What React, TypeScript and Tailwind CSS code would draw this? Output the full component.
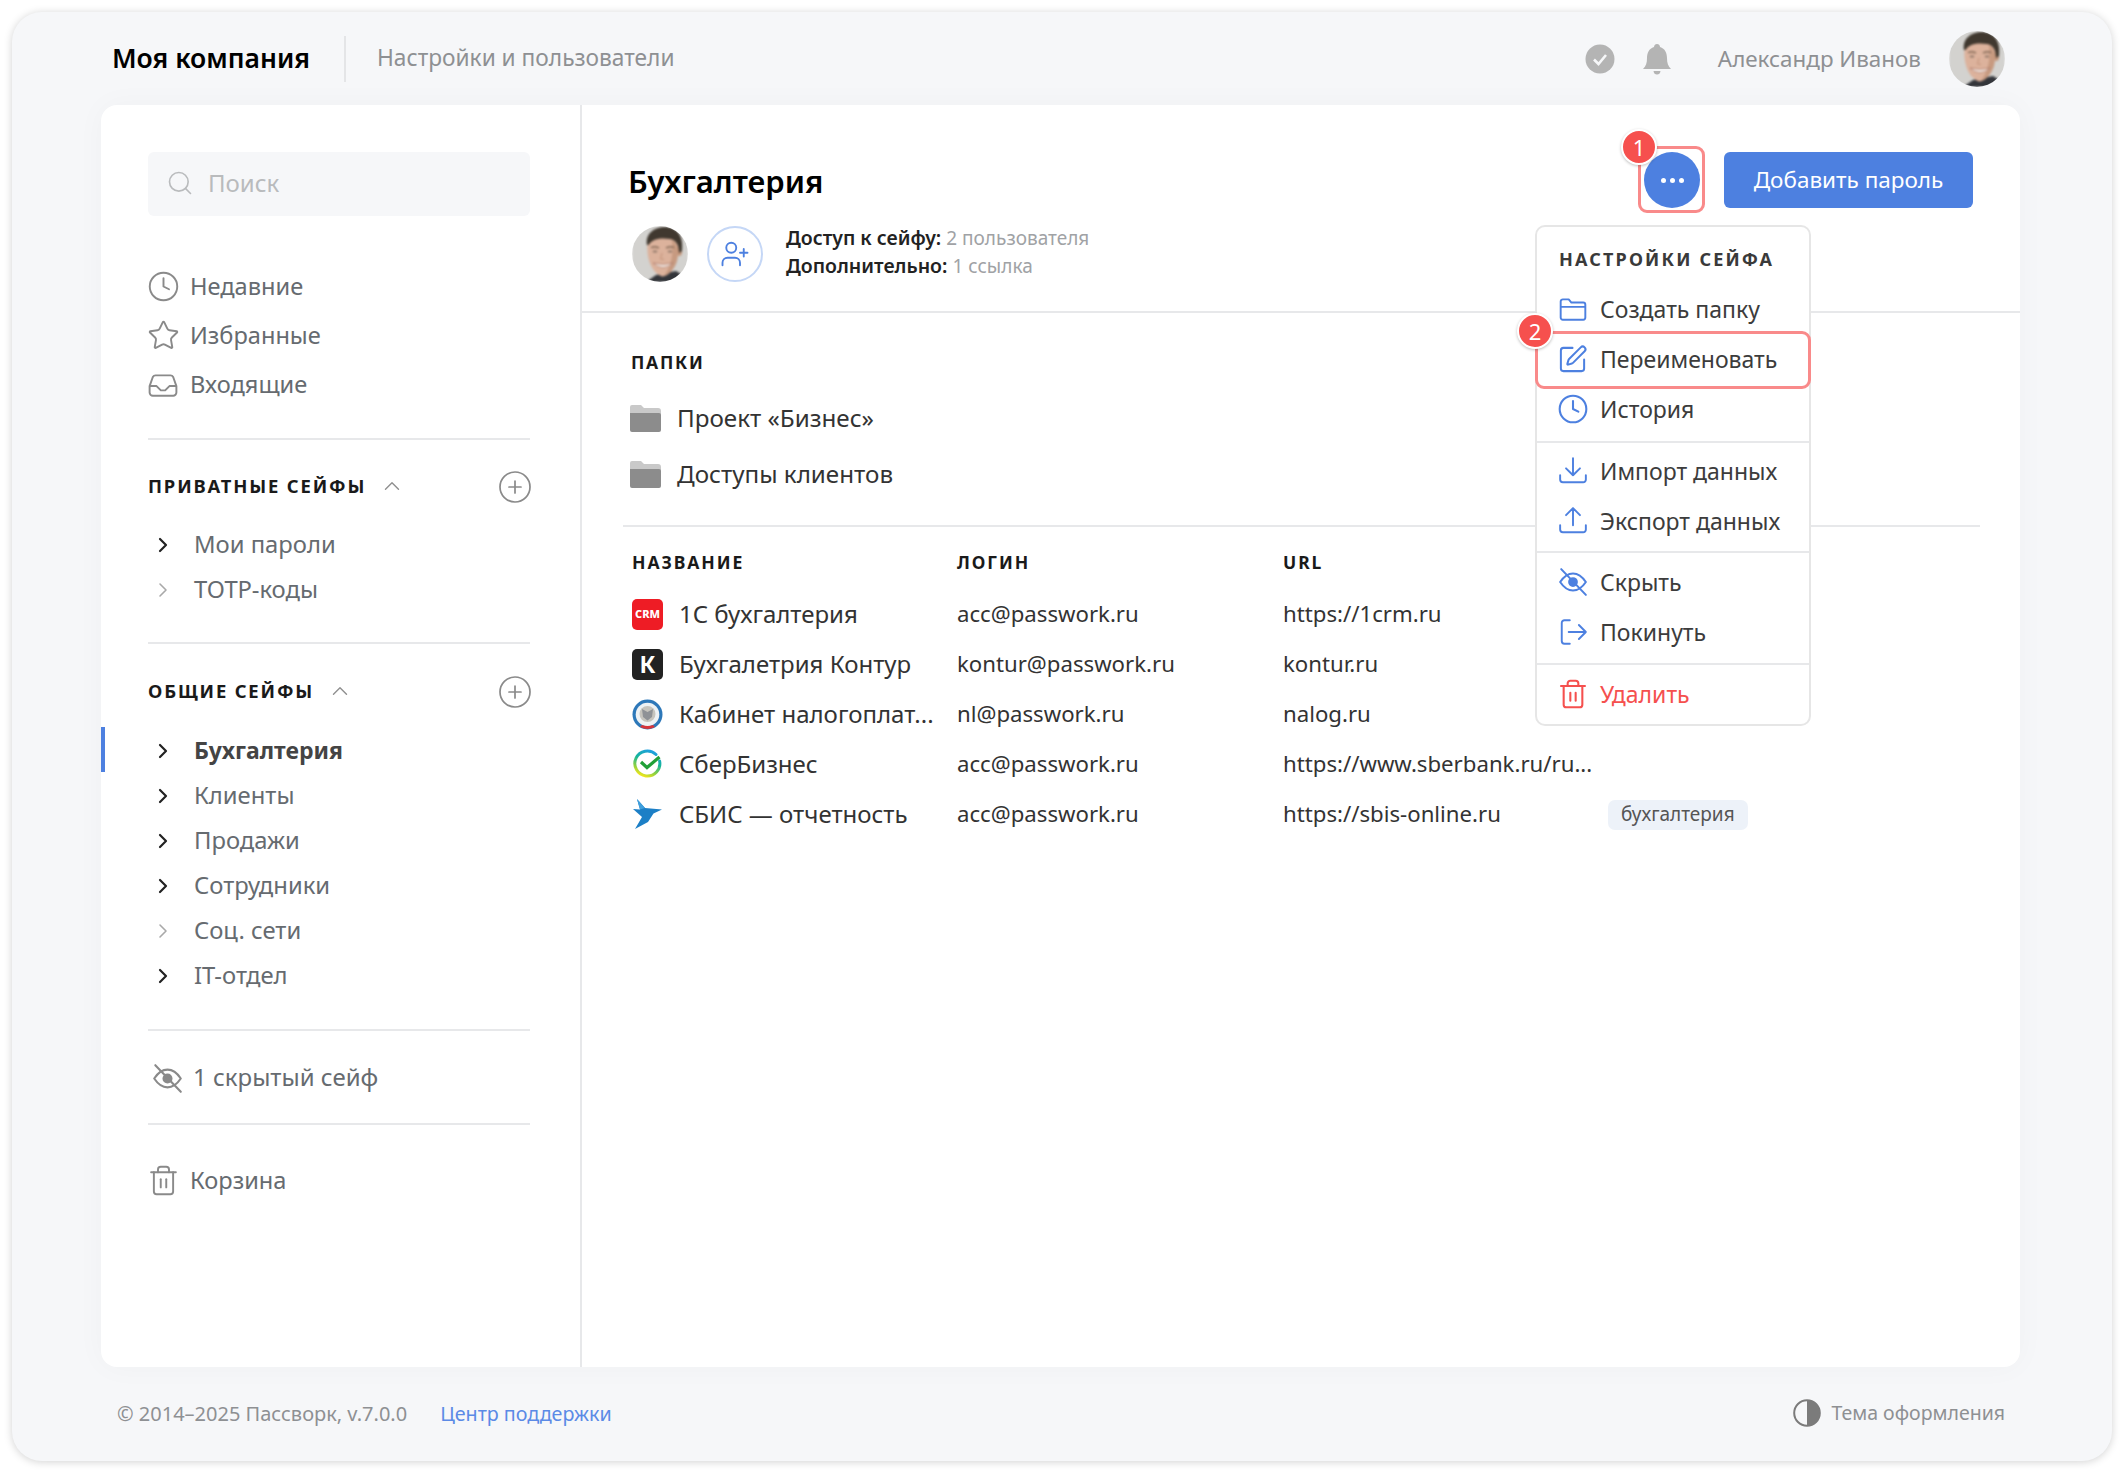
import { ChevronRight, ChevronUp, CirclePlus, Clock, Search, SquarePen, Star, Trash2, UserPlus } from 'lucide-react';
import type { ReactNode } from 'react';

function Avatar() {
    return (
        <div className="w-[56px] h-[56px] rounded-full overflow-hidden flex-shrink-0">
            <svg width="56" height="56" viewBox="0 0 56 56" className="blur-[0.9px]">
                <rect width="56" height="56" fill="#d3d2cf" />
                <path d="M14 56 L24 49 L44 45 L52 50 L52 56 Z" fill="#33353a" />
                <path d="M15.5 18 C14.5 30 18 46 30 50.5 C40 49.5 46.5 36 46.5 22 C46.5 14 40 10 30 10 C22 10 16.5 12 15.5 18Z" fill="#dcb29c" />
                <path d="M40 14 C46 18 47 26 45 35 C43 42 38 48 32 50 C38 42 42 30 40 14Z" fill="#c79a80" />
                <ellipse cx="47.5" cy="25" rx="2.6" ry="5" fill="#c4977c" />
                <path d="M15 19 C13 8 22 1 33 1 C44 1 52 9 50 25 L47 27 C47 19 44 14 38 13 C30 12 21 12 16.5 19Z" fill="#40382f" />
                <path d="M19 21.5 Q23 20 27 22 M34 22 Q38 20 42 21.5" stroke="#6f5847" strokeWidth="1.3" fill="none" />
                <ellipse cx="23" cy="25.5" rx="2.4" ry="1" fill="#8a7364" />
                <ellipse cx="38" cy="25.5" rx="2.4" ry="1" fill="#8a7364" />
                <path d="M30 27 L28.5 33 L32 33.5" stroke="#c4937a" strokeWidth="1" fill="none" />
                <path d="M21 37 Q31 46 41 37 Q31 40 21 37Z" fill="#f7f1ec" stroke="#a66f5b" strokeWidth="0.7" />
            </svg>
        </div>
    );
}

function EyeOffIcon({ className }: { className: string }) {
    return (
        <svg viewBox="0 0 28 28" fill="none" stroke="currentColor" strokeWidth="1.9" strokeLinecap="round" strokeLinejoin="round" className={className}>
            <path d="M2 14 C6 8 10 6 14 6 S22 8 26 14 C22 20 18 22 14 22 S6 20 2 14Z" />
            <circle cx="14" cy="14" r="3.6" fill="currentColor" />
            <path d="M3 2 L26 26" />
        </svg>
    );
}

function InboxIcon() {
    return (
        <svg viewBox="0 0 28 28" fill="none" stroke="#8a8a8a" strokeWidth="1.8" strokeLinejoin="round" className="w-[30px] h-[30px] flex-shrink-0">
            <path d="M1.5 15 L4.5 6.5 A3 3 0 0 1 7 5 H21 A3 3 0 0 1 23.5 6.5 L26.5 15 V21 A3 3 0 0 1 23.5 24 H4.5 A3 3 0 0 1 1.5 21Z" />
            <path d="M1.5 15 H8 L12 19 H16 L20 15 H26.5" />
        </svg>
    );
}

function MenuIcon({ d }: { d: string }) {
    return (
        <svg viewBox="0 0 28 28" fill="none" stroke="#4d80e0" strokeWidth="1.8" strokeLinecap="round" strokeLinejoin="round" className="w-[30px] h-[30px] -ml-[1px]">
            <path d={d} />
        </svg>
    );
}

function GrayFolder() {
    return (
        <svg width="31" height="27" viewBox="0 0 31 27" className="flex-shrink-0">
            <path d="M2 0 H11 L14 3 H28 Q31 3 31 6 V14 H0 V2 Q0 0 2 0Z" fill="#c9c9c9" />
            <path d="M0 8 H29 Q31 8 31 10 V25 Q31 27 29 27 H2 Q0 27 0 25Z" fill="#8c8c8c" />
        </svg>
    );
}

function SberLogo() {
    return (
        <svg width="31" height="31" viewBox="0 0 31 31">
            <defs>
                <linearGradient id="sber" x1="0.7" y1="0" x2="0.3" y2="1">
                    <stop offset="0" stopColor="#1e9fe0" />
                    <stop offset="0.4" stopColor="#16b59a" />
                    <stop offset="0.75" stopColor="#8fd13f" />
                    <stop offset="1" stopColor="#f0e61e" />
                </linearGradient>
            </defs>
            <path d="M24 5.5 A12.5 12.5 0 1 0 27.6 12" fill="none" stroke="url(#sber)" strokeWidth="3" strokeLinecap="round" />
            <path d="M9 13 L15 18.5 L27.5 8" fill="none" stroke="#21a038" strokeWidth="3.2" />
        </svg>
    );
}

function NalogLogo() {
    return (
        <svg width="31" height="31" viewBox="0 0 31 31" className="blur-[0.4px]">
            <circle cx="15.5" cy="15.5" r="15" fill="#2d78b9" />
            <circle cx="15.5" cy="15.5" r="11.8" fill="#eef2f4" />
            <circle cx="15.5" cy="15" r="8" fill="#c6c4bd" />
            <path d="M10 10 L15.5 13 L21 10 L20 18 L15.5 21.5 L11 18Z" fill="#8f9296" />
            <path d="M8 28 Q15.5 32 23 28 L21 26 Q15.5 28 10 26Z" fill="#d8343a" />
        </svg>
    );
}

function SbisLogo() {
    return (
        <svg width="31" height="31" viewBox="0 0 31 31">
            <path d="M5 0 L13 9 L30 10.5 L21.5 14.5 L16 23 L3 30 L10 18 L1 10 L8 10.5Z" fill="#1c7fc6" />
            <path d="M5 0 L13 9 L8 10.5Z" fill="#3f9fdc" />
        </svg>
    );
}

function Divider({ className }: { className: string }) {
    return <div className={`h-[2px] bg-[#e7e8ea] ${className}`}></div>;
}

function NavRow({ icon, label }: { icon: ReactNode; label: string }) {
    return (
        <div className="h-[49px] flex items-center">
            <div className="w-[30px] flex justify-center">{icon}</div>
            <span className="ml-[12px] text-[23.6px] text-[#666b70]">{label}</span>
        </div>
    );
}

function SectionHead({ title }: { title: string }) {
    return (
        <div className="h-[46px] flex items-center justify-between">
            <div className="flex items-center gap-[13px]">
                <span className="text-[18.4px] font-bold tracking-[0.1em] text-[#1a1a1a]">{title}</span>
                <ChevronUp size={26} strokeWidth={1.3} color="#8f8f8f" />
            </div>
            <CirclePlus size={36} strokeWidth={1.15} color="#8a8a8a" className="-mr-[3px] mt-[2px]" />
        </div>
    );
}

function VaultRow({ label, dim, active }: { label: string; dim?: boolean; active?: boolean }) {
    return (
        <div className="relative h-[45px] flex items-center pt-[2px]">
            {active && <div className="absolute left-[-47px] top-0 h-[45px] w-[4px] bg-[#4d80e0]"></div>}
            <div className="w-[46px] pl-[3px]">
                <ChevronRight size={24} strokeWidth={dim ? 1.6 : 2.2} color={dim ? '#a9a9a9' : '#222'} />
            </div>
            <span className={active ? 'text-[23px] font-bold text-[#444]' : 'text-[23.8px] text-[#666b70]'}>{label}</span>
        </div>
    );
}

function MenuItem({ icon, label, red }: { icon: ReactNode; label: string; red?: boolean }) {
    return (
        <div className="h-[50px] flex items-center pl-[22px] pb-[2px]">
            <div className="w-[41px] flex">{icon}</div>
            <span className={`text-[23px] ${red ? 'text-[#f5504e]' : 'text-[#3c3c3c]'}`}>{label}</span>
        </div>
    );
}

const tray = 'M2 18 V22 A2.5 2.5 0 0 0 4.5 24.5 H23.5 A2.5 2.5 0 0 0 26 22 V18';

const rows = [
    { logo: <div className="w-[31px] h-[31px] rounded-[5px] bg-[#ee1c25] flex items-center justify-center text-white text-[11px] font-extrabold">CRM</div>, name: '1С бухгалтерия', login: 'acc@passwork.ru', url: 'https://1crm.ru' },
    { logo: <div className="w-[31px] h-[31px] rounded-[5px] bg-[#222222] flex items-center justify-center text-white text-[23px] font-bold">К</div>, name: 'Бухгалетрия Контур', login: 'kontur@passwork.ru', url: 'kontur.ru' },
    { logo: <NalogLogo />, name: 'Кабинет налогоплат...', login: 'nl@passwork.ru', url: 'nalog.ru' },
    { logo: <SberLogo />, name: 'СберБизнес', login: 'acc@passwork.ru', url: 'https://www.sberbank.ru/ru...' },
    { logo: <SbisLogo />, name: 'СБИС — отчетность', login: 'acc@passwork.ru', url: 'https://sbis-online.ru', tag: 'бухгалтерия' },
];

export default function App() {
    return (
        <div className="w-[2124px] h-[1473px] bg-white p-[12px] font-['Noto_Sans',sans-serif] overflow-hidden">
            <div className="h-[1449px] rounded-[30px] bg-[#f6f7f9] shadow-[0_1px_8px_rgba(0,0,0,0.18)] flex flex-col">
                <header className="h-[93px] flex items-center pl-[100px] pr-[107px]">
                    <span className="text-[26.5px] font-semibold text-black">Моя компания</span>
                    <div className="w-[2px] h-[46px] bg-[#e4e5e7] ml-[34px] mr-[31px]"></div>
                    <span className="text-[22.7px] text-[#8e9093]">Настройки и пользователи</span>
                    <div className="flex-grow"></div>
                    <svg width="30" height="30" viewBox="0 0 30 30">
                        <circle cx="15" cy="15" r="14.5" fill="#b4b4b4" />
                        <path d="M9 15.5 L13.5 20 L21 11" fill="none" stroke="#f6f7f9" strokeWidth="2.6" />
                    </svg>
                    <svg width="30" height="32" viewBox="0 0 30 32" className="ml-[27px]">
                        <path d="M15 1 C17 1 18 2.5 18 4 C23 5.5 25 10 25 15 C25 20 26 23 29 26 H1 C4 23 5 20 5 15 C5 10 7 5.5 12 4 C12 2.5 13 1 15 1Z" fill="#b4b4b4" />
                        <path d="M11.5 28 H18.5 Q18 31.5 15 31.5 Q12 31.5 11.5 28Z" fill="#b4b4b4" />
                    </svg>
                    <span className="ml-[46px] mr-[28px] text-[22.4px] text-[#8e9093]">Александр Иванов</span>
                    <Avatar />
                </header>

                <div className="h-[1262px] ml-[89px] w-[1919px] bg-white rounded-[16px] shadow-[0_0_30px_rgba(0,0,0,0.03)] flex">
                    <aside className="w-[481px] flex-shrink-0 border-r-2 border-[#e7e8ea] pt-[47px] pl-[47px] pr-[50px]">
                        <div className="h-[64px] rounded-[6px] bg-[#f6f7f9] flex items-center pl-[18px] pb-[2px]">
                            <Search size={28} strokeWidth={1.4} color="#b9bbbd" />
                            <span className="ml-[14px] text-[24px] text-[#b9bbbd]">Поиск</span>
                        </div>
                        <div className="mt-[46px]">
                            <NavRow icon={<Clock size={33} strokeWidth={1.4} color="#8a8a8a" className="flex-shrink-0" />} label="Недавние" />
                            <NavRow icon={<Star size={33} strokeWidth={1.4} color="#8a8a8a" className="flex-shrink-0" />} label="Избранные" />
                            <NavRow icon={<InboxIcon />} label="Входящие" />
                        </div>
                        <Divider className="mt-[29px]" />
                        <div className="mt-[23px]"><SectionHead title="ПРИВАТНЫЕ СЕЙФЫ" /></div>
                        <div className="mt-[12px]">
                            <VaultRow label="Мои пароли" />
                            <VaultRow label="ТОТР-коды" dim />
                        </div>
                        <Divider className="mt-[31px]" />
                        <div className="mt-[24px]"><SectionHead title="ОБЩИЕ СЕЙФЫ" /></div>
                        <div className="mt-[13px]">
                            <VaultRow label="Бухгалтерия" active />
                            <VaultRow label="Клиенты" />
                            <VaultRow label="Продажи" />
                            <VaultRow label="Сотрудники" />
                            <VaultRow label="Соц. сети" dim />
                            <VaultRow label="IT-отдел" />
                        </div>
                        <Divider className="mt-[32px]" />
                        <div className="mt-[22px] h-[50px] flex items-center pl-[4px] text-[#8a8a8a]">
                            <EyeOffIcon className="w-[31px] h-[31px]" />
                            <span className="ml-[10px] pb-[2px] text-[24px] text-[#666b70]">1 скрытый сейф</span>
                        </div>
                        <Divider className="mt-[20px]" />
                        <div className="mt-[31px] h-[50px]">
                            <NavRow icon={<Trash2 size={33} strokeWidth={1.4} color="#8a8a8a" className="flex-shrink-0" />} label="Корзина" />
                        </div>
                    </aside>

                    <main className="relative flex-grow">
                        <div className="h-[208px] border-b-2 border-[#e7e8ea] flex justify-between pl-[46px] pr-[47px]">
                            <div className="pt-[54px]">
                                <h1 className="h-[44px] flex items-center text-[31px] font-semibold text-black">Бухгалтерия</h1>
                                <div className="mt-[21px] ml-[4px] flex items-center">
                                    <Avatar />
                                    <div className="ml-[19px] w-[56px] h-[56px] rounded-full border-2 border-[#c5d7f6] flex items-center justify-center">
                                        <UserPlus size={30} strokeWidth={1.5} color="#4d80e0" />
                                    </div>
                                    <div className="ml-[23px] pb-[3px] text-[19.5px] leading-[28px]">
                                        <div><span className="font-semibold text-[#222]">Доступ к сейфу:</span> <span className="text-[19px] text-[#a0a2a5]">2 пользователя</span></div>
                                        <div><span className="font-semibold text-[#222]">Дополнительно:</span> <span className="text-[19px] text-[#a0a2a5]">1 ссылка</span></div>
                                    </div>
                                </div>
                            </div>
                            <div className="pt-[47px] flex items-start gap-[24px]">
                                <div className="relative w-[56px] h-[56px] rounded-full bg-[#4d80e0] flex items-center justify-center gap-[4px]">
                                    <span className="w-[5px] h-[5px] rounded-full bg-white"></span>
                                    <span className="w-[5px] h-[5px] rounded-full bg-white"></span>
                                    <span className="w-[5px] h-[5px] rounded-full bg-white"></span>
                                    <div className="absolute left-[-6px] top-[-6px] w-[67px] h-[67px] rounded-[9px] border-[3px] border-[#f98a8a]"></div>
                                    <div className="absolute left-[-23px] top-[-23px] w-[36px] h-[36px] rounded-full bg-[#f6504e] border-2 border-white shadow-[0_1px_3px_rgba(0,0,0,0.25)] flex items-center justify-center text-white text-[22px]">1</div>
                                </div>
                                <button className="w-[249px] h-[56px] rounded-[6px] bg-[#4d80e0] text-white text-[22.5px]">Добавить пароль</button>
                            </div>
                        </div>

                        <div className="pl-[49px] mt-[35px]">
                            <div className="h-[28px] flex items-center text-[17.5px] font-bold tracking-[0.1em] text-[#1a1a1a]">ПАПКИ</div>
                            <div className="mt-[14px] -ml-[1px]">
                                <div className="h-[56px] flex items-center gap-[16px] text-[24.2px] text-[#333]"><GrayFolder />Проект «Бизнес»</div>
                                <div className="h-[56px] flex items-center gap-[16px] text-[24.2px] text-[#333]"><GrayFolder />Доступы клиентов</div>
                            </div>
                        </div>
                        <Divider className="mt-[23px] ml-[41px] w-[1357px]" />

                        <div className="ml-[50px] mt-[21px]">
                            <div className="h-[28px] grid grid-cols-[325px_326px_325px_1fr] items-center text-[17.5px] font-bold tracking-[0.11em] text-[#1a1a1a]">
                                <span>НАЗВАНИЕ</span>
                                <span>ЛОГИН</span>
                                <span>URL</span>
                            </div>
                            <div className="mt-[13px]">
                                {rows.map((row) => (
                                    <div key={row.name} className="h-[50px] grid grid-cols-[325px_326px_325px_1fr] items-center text-[22.2px] text-[#333]">
                                        <div className="flex items-center gap-[16px]">
                                            <div className="w-[31px] h-[31px]">{row.logo}</div>
                                            <span className="whitespace-nowrap text-[24px]">{row.name}</span>
                                        </div>
                                        <span>{row.login}</span>
                                        <span className="whitespace-nowrap">{row.url}</span>
                                        <div className="pb-[2px]">
                                            {row.tag && <span className="inline-flex items-center h-[30px] px-[13px] rounded-[7px] bg-[#edf2f9] text-[19px] text-[#555]">{row.tag}</span>}
                                        </div>
                                    </div>
                                ))}
                            </div>
                        </div>

                        <div className="absolute left-[953px] top-[120px] w-[276px] h-[501px] rounded-[10px] border-2 border-[#e6e6e6] bg-white">
                            <div className="h-[58px] pt-[6px] pl-[22px] flex items-center text-[18px] font-bold tracking-[0.12em] text-[#3a3a3a]">НАСТРОЙКИ СЕЙФА</div>
                            <MenuItem icon={<MenuIcon d="M2.5 7 A2 2 0 0 1 4.5 5 H10 L12.5 8 H23.5 A2 2 0 0 1 25.5 10 V22 A2 2 0 0 1 23.5 24 H4.5 A2 2 0 0 1 2.5 22Z M2.5 12 H25.5" />} label="Создать папку" />
                            <div className="relative">
                                <MenuItem icon={<SquarePen size={31} strokeWidth={1.55} color="#4d80e0" className="-ml-[2px]" />} label="Переименовать" />
                                <div className="absolute left-[-2px] right-[-2px] top-[-4px] bottom-[-4px] rounded-[9px] border-[3px] border-[#f98a8a]"></div>
                                <div className="absolute left-[-20px] top-[-22px] w-[36px] h-[36px] rounded-full bg-[#f6504e] border-2 border-white shadow-[0_1px_3px_rgba(0,0,0,0.25)] flex items-center justify-center text-white text-[22px]">2</div>
                            </div>
                            <MenuItem icon={<Clock size={32} strokeWidth={1.55} color="#4d80e0" className="-ml-[2px]" />} label="История" />
                            <Divider className="mt-[6px]" />
                            <div className="mt-[4px]">
                                <MenuItem icon={<MenuIcon d={`M14 2 V18 M7.5 11.5 L14 18 L20.5 11.5 ${tray}`} />} label="Импорт данных" />
                                <MenuItem icon={<MenuIcon d={`M14 18 V2 M7.5 8.5 L14 2 L20.5 8.5 ${tray}`} />} label="Экспорт данных" />
                            </div>
                            <Divider className="mt-[4px]" />
                            <div className="mt-[5px]">
                                <MenuItem icon={<div className="text-[#4d80e0] -ml-[1px]"><EyeOffIcon className="w-[30px] h-[30px]" /></div>} label="Скрыть" />
                                <MenuItem icon={<MenuIcon d="M11 3 H6 A2.5 2.5 0 0 0 3.5 5.5 V22.5 A2.5 2.5 0 0 0 6 25 H11 M10 14 H26 M19.5 7.5 L26 14 L19.5 20.5" />} label="Покинуть" />
                            </div>
                            <Divider className="mt-[5px]" />
                            <div className="mt-[5px]">
                                <MenuItem icon={<Trash2 size={32} strokeWidth={1.55} color="#f5504e" className="-ml-[2px]" />} label="Удалить" red />
                            </div>
                        </div>
                    </main>
                </div>

                <footer className="flex-grow flex items-center pl-[105px] pr-[107px] text-[20px] text-[#8e9093]">
                    <span>© 2014–2025 Пассворк, v.7.0.0</span>
                    <span className="ml-[33px] text-[19.7px] text-[#5b8ae6]">Центр поддержки</span>
                    <div className="flex-grow"></div>
                    <svg width="28" height="28" viewBox="0 0 28 28" className="mb-[2px]">
                        <circle cx="14" cy="14" r="12.8" fill="none" stroke="#7b7b7b" strokeWidth="2" />
                        <path d="M14 1.2 A12.8 12.8 0 0 1 14 26.8Z" fill="#7b7b7b" />
                    </svg>
                    <span className="ml-[10px] mb-[2px] text-[19.5px]">Тема оформления</span>
                </footer>
            </div>
        </div>
    );
}
